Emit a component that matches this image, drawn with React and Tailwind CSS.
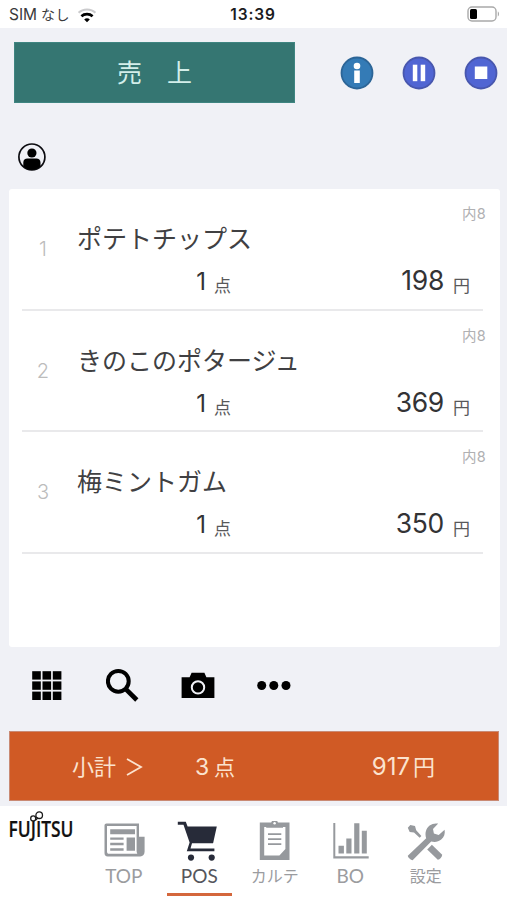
import React from "react";

const items = [
  { name: "ポテトチップス", qty: 1, price: 198, tax: "内8" },
  { name: "きのこのポタージュ", qty: 1, price: 369, tax: "内8" },
  { name: "梅ミントガム", qty: 1, price: 350, tax: "内8" },
];

function StatusBar() {
  return (
    <div className="h-7 bg-white flex items-center justify-between pl-[9px] pr-[7px] shrink-0">
      <div className="flex items-center w-[198px] pt-[2px] text-[#3a3a3c]">
        <span className="text-[15.5px] leading-none">SIM</span>
        <span className="text-[14px] leading-none ml-[4px] tracking-[0.3px]">なし</span>
        <svg width="20" height="15" viewBox="0 0 20 15" className="ml-[7px]" fill="none">
          <path d="M1.6 4.8C6 .4 14 .4 18.4 4.8" stroke="#cbcbcd" strokeWidth="2.2" />
          <path d="M4.4 8.2C7.4 5.4 12.6 5.4 15.6 8.2" stroke="#000" strokeWidth="2.6" />
          <path d="M10 14.2 7.2 11.4C8.8 9.9 11.2 9.9 12.8 11.4Z" fill="#000" />
        </svg>
      </div>
      <div className="mt-[2px] text-[15.5px] font-semibold leading-none text-[#1c1c1e] tracking-[0.9px]">13:39</div>
      <div className="w-[201px] flex justify-end">
        <svg width="33" height="16" viewBox="0 0 33 16" fill="none">
          <rect x="1" y="1" width="28" height="14" rx="4" stroke="#a9a9a9" strokeWidth="1.4" />
          <rect x="3" y="3" width="7" height="10" rx="1.5" fill="#000" />
          <path d="M30.8 5.6c1.6.6 1.6 4.2 0 4.8z" fill="#a9a9a9" />
        </svg>
      </div>
    </div>
  );
}

function RoundButton({ fill, stroke, children }) {
  return (
    <button>
      <svg width="34" height="34" viewBox="0 0 34 34">
        <circle cx="17" cy="17" r="15.5" fill={fill} stroke={stroke} strokeWidth="1.8" />
        <g fill="#fff">{children}</g>
      </svg>
    </button>
  );
}

function ItemRow({ index, item }) {
  return (
    <li className="h-[121.5px] ml-[13px] mr-[17px] flex border-b-2 border-[#e9e9eb]">
      <span className="w-[42px] self-center pt-[1px] text-center text-[20px] font-light text-[#bcbcbc]">{index}</span>
      <div className="flex-1 ml-[13px] pt-[15px] flex flex-col">
        <div className="h-5 leading-5 -mr-[3px] text-right text-[14.5px] tracking-[0.3px] text-[#b0b0b2]">{item.tax}</div>
        <div className="h-[30px] leading-[30px] text-[25px] text-[#404042]">{item.name}</div>
        <div className="h-[34px] mt-[9px] flex items-baseline leading-[34px] text-[#333335]">
          <span className="w-[129px] text-right text-[24px]">{item.qty}</span>
          <span className="relative top-[2px] ml-[8px] text-[17px] leading-none text-[#58585a]">点</span>
          <span className="ml-auto text-[26.5px] tracking-[-0.3px]">{item.price}</span>
          <span className="relative top-[2px] ml-[9px] mr-[13px] text-[17px] leading-none text-[#58585a]">円</span>
        </div>
      </div>
    </li>
  );
}

function Toolbar() {
  return (
    <div className="h-[84px] pt-[18px] pl-[30px] flex gap-[41.5px] shrink-0">
      <svg width="34" height="40" viewBox="0 0 34 40">
        {[0, 1, 2].map((r) =>
          [0, 1, 2].map((c) => (
            <rect key={`${r}${c}`} x={2.2 + c * 10.3} y={6.2 + r * 10.2} width="8.6" height="8.4" />
          ))
        )}
      </svg>
      <svg width="34" height="40" viewBox="0 0 34 40" fill="none" stroke="#000">
        <circle cx="12.3" cy="16.3" r="10.4" strokeWidth="4" />
        <path d="m19.6 23.8 11.2 11.2" strokeWidth="4.6" />
      </svg>
      <svg width="34" height="40" viewBox="0 0 34 40">
        <path d="M.6 12.3h8l2-4.6h12.8l2 4.6h8V33H.6z" />
        <circle cx="17" cy="22.4" r="6.2" fill="none" stroke="#f0f1f6" strokeWidth="2" />
      </svg>
      <svg width="34" height="40" viewBox="0 0 34 40">
        <circle cx="4.7" cy="20.5" r="4.5" />
        <circle cx="16.8" cy="20.5" r="4.5" />
        <circle cx="29" cy="20.5" r="4.5" />
      </svg>
    </div>
  );
}

function FujitsuLogo() {
  return (
    <svg width="76" height="38" viewBox="0 0 76 38" className="ml-[8px]">
      <g fill="none" stroke="#1a1a1a" strokeWidth="1.3">
        <circle cx="25.2" cy="8.4" r="2.5" />
        <circle cx="31.2" cy="5.2" r="3.3" />
        <path d="M27.2 10c1.8-.3 2.2-1.500 2.500-2.600" />
      </g>
      <text
        x="0.5"
        y="26.7"
        textLength="65"
        lengthAdjust="spacingAndGlyphs"
        fill="#111"
        stroke="#111"
        strokeWidth="0.2"
        fontFamily="'Open Sans'"
        fontWeight="600"
        fontSize="21.5"
      >
        FUJITSU
      </text>
    </svg>
  );
}

const tabIcons = {
  news: (
    <svg width="44" height="42" viewBox="0 0 44 42" fill="#96999d">
      <path fillRule="evenodd" d="M4.5 2.5H37v13.3h5.6v14.7c0 3-1.6 4.9-4.4 4.9H5.7C3.5 35.4 2.5 34.3 2.5 32V4.5c0-1.2.8-2 2-2zM5 5v25.500c0 1.500.7 2.300 2 2.300h28.300c-.6-1-.7-2-.7-3V5z" />
      <path d="M8.2 8.2H33v5H8.2zM8.2 16.4h13.4v2.4H8.2zM8.2 21.8h13.4v2.4H8.2zM8.2 27.3h13.4v2.4H8.2zM24.6 16.4H33v13.3h-8.4z" />
    </svg>
  ),
  cart: (
    <svg width="44" height="42" viewBox="0 0 44 42" fill="#272b39">
      <path d="M.8.8h8l1.800 4.700h29.200l-3.700 16.800H15l-1.500 5.200h23.900v2.700H9.800l2.800-8.700L6.500 3.800H.8z" />
      <circle cx="14" cy="36.6" r="3.1" />
      <circle cx="34.7" cy="36.6" r="3.1" />
    </svg>
  ),
  chart: (
    <svg width="44" height="42" viewBox="0 0 44 42" fill="#96999d">
      <path fillRule="evenodd" d="M6.8 1.6h29.7V39H6.8zM11.2 6v28.500h15.200l6-6.400V6z" />
      <path d="M13.2 2h5c.2-1.900 1.700-2.900 3.400-2.900S24.800.1 25 2h5v4.800H13.200z" />
      <circle cx="21.6" cy="2.3" r="1.2" fill="#fff" />
      <path d="M15 12.3h13.3v1.8H15zM15 17.3h13.3v1.8H15zM15 22.3h13.3v1.8H15z" />
    </svg>
  ),
  bars: (
    <svg width="44" height="42" viewBox="0 0 44 42" fill="#96999d">
      <path d="M5.3 2h2v33.200h33.400v2.400H5.300zM10.500 24.800h5.400v7.600h-5.400zM18.300 17.400h5.200v15h-5.200zM26.200 2.200h5.200v30.200h-5.200zM33.800 9.800h5v22.600h-5z" />
    </svg>
  ),
  tools: (
    <svg width="44" height="42" viewBox="0 0 44 42" fill="#96999d">
      <path d="M3.8 6.7 6.300 4l4.700 1 1.200 4.300 5.200 5.800-1.700 1.700-5.700-5.300-4.300-.6z" />
      <path d="M3.800 34.800 22.200 17.300c-1.600-4.800-.3-9.700 3.400-12.700 2.600-2 5.500-2.600 8.600-2l-5.200 5.400.9 4.500 4.800 1.600 5.900-5.400c.7 3.700-.4 7.500-3.400 9.800-2.900 2.400-6.500 2.900-10 1.900L8.600 39.300c-1.800-.2-4.600-2.700-4.800-4.500z" />
      <path d="m27.900 23.800 10.300 9.900c-.2 2.200-2.200 4.700-4.400 5.100L23.200 28.600z" />
    </svg>
  ),
};

const tabs = [
  { label: "TOP", icon: "news", text: "text-[19px]" },
  { label: "POS", icon: "cart", text: "text-[19px]", active: true },
  { label: "カルテ", icon: "chart", text: "text-[16px]" },
  { label: "BO", icon: "bars", text: "text-[19px]" },
  { label: "設定", icon: "tools", text: "text-[16px]" },
];

function TabBar() {
  return (
    <nav className="h-[94px] bg-white flex shrink-0 overflow-hidden font-['Lato','Noto_Sans_CJK_JP',sans-serif]">
      <div className="w-[86px] pt-[4px]">
        <FujitsuLogo />
      </div>
      {tabs.map((tab) => (
        <button key={tab.label} className="w-[75.5px] pt-[15px] flex flex-col items-center">
          {tabIcons[tab.icon]}
          <span
            className={`${tab.text} w-[65px] h-[33px] leading-[26px] border-b-3 ${
              tab.active ? "border-[#d4673c] text-[#55565c]" : "border-transparent text-[#9b9c9f]"
            }`}
          >
            {tab.label}
          </span>
        </button>
      ))}
    </nav>
  );
}

export default function App() {
  return (
    <div className="w-[507px] h-[900px] overflow-hidden flex flex-col bg-[#f0f1f6] font-['Inter','Noto_Sans_CJK_JP',sans-serif]">
      <StatusBar />

      <header className="pt-[14px] pl-[14px] flex items-center shrink-0">
        <div className="w-[281px] h-[61px] pt-[3px] bg-[#357672] border border-[#3f8581] flex items-center justify-center text-[25px] text-[#d3eeea]">
          売　上
        </div>
        <div className="ml-[45px] flex gap-[28px]">
          <RoundButton fill="#347bb6" stroke="#2c6597">
            <circle cx="17" cy="10" r="3.3" />
            <rect x="14.2" y="14.5" width="5.6" height="12.5" />
          </RoundButton>
          <RoundButton fill="#5065d3" stroke="#4857ae">
            <rect x="10.8" y="8.7" width="4.5" height="16.5" />
            <rect x="18.7" y="8.7" width="4.5" height="16.5" />
          </RoundButton>
          <RoundButton fill="#5065d3" stroke="#4857ae">
            <rect x="10.8" y="10.5" width="12.5" height="12.5" />
          </RoundButton>
        </div>
      </header>

      <div className="h-[86px] pl-[17px] pt-[39px] shrink-0">
        <svg width="30" height="30" viewBox="0 0 30 30">
          <circle cx="14.9" cy="15" r="13" fill="none" stroke="#0c0c10" strokeWidth="1.7" />
          <circle cx="14.9" cy="11" r="4.6" />
          <path d="M6.3 24.2v-3.6c0-2.6 1.7-4 4.2-4h8.8c2.5 0 4.2 1.4 4.2 4v3.6c-4.8 5-12.4 5-17.2 0z" />
        </svg>
      </div>

      <ul className="h-[458px] ml-[9px] mr-[7px] bg-white rounded-[3px] shrink-0">
        {items.map((item, i) => (
          <ItemRow key={item.name} index={i + 1} item={item} />
        ))}
      </ul>

      <Toolbar />

      <button className="h-[70px] ml-[9px] mr-[8px] pt-[2px] bg-[#d05a25] border border-[#c98a74] flex items-center shrink-0 text-[#fbe3cf] text-[22px]">
        <span className="ml-[62px]">小計</span>
        <svg width="17" height="20" viewBox="0 0 17 20" className="ml-[10px] -mt-[1px]" fill="none" stroke="#fbe3cf" strokeWidth="1.8">
          <path d="m1 2 14 8-14 8" />
        </svg>
        <span className="ml-[52px] w-[40px] flex items-baseline justify-between">
          <span className="text-[23px]">3</span>
          <span className="text-[21px]">点</span>
        </span>
        <span className="ml-auto mr-[63px] flex items-baseline gap-[3px]">
          <span className="text-[24px]">917</span>
          <span>円</span>
        </span>
      </button>
      <div className="h-[5px] shrink-0" />

      <TabBar />
    </div>
  );
}
